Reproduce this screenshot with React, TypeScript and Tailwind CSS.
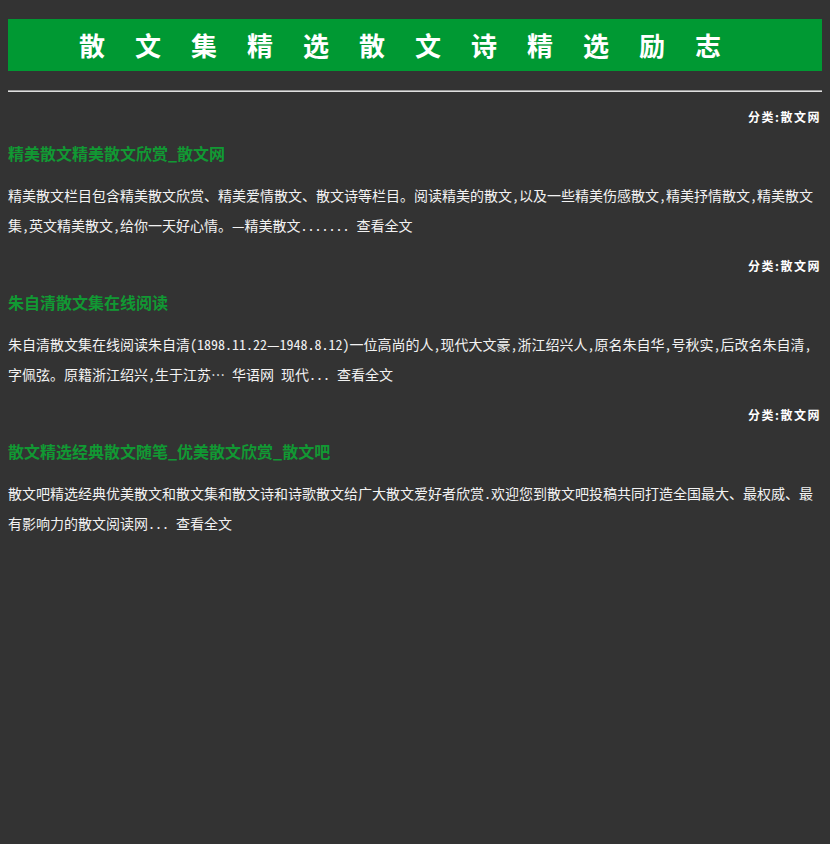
import React from "react";

const items = [
  {
    title: "精美散文精美散文欣赏_散文网",
    l1: "精美散文栏目包含精美散文欣赏、精美爱情散文、散文诗等栏目。阅读精美的散文,以及一些精美伤感散文,精美抒情散文,精美散文",
    l2: "集,英文精美散文,给你一天好心情。—精美散文.......",
  },
  {
    title: "朱自清散文集在线阅读",
    l1: "朱自清散文集在线阅读朱自清(1898.11.22—1948.8.12)一位高尚的人,现代大文豪,浙江绍兴人,原名朱自华,号秋实,后改名朱自清,",
    l2: "字佩弦。原籍浙江绍兴,生于江苏… 华语网 现代...",
  },
  {
    title: "散文精选经典散文随笔_优美散文欣赏_散文吧",
    l1: "散文吧精选经典优美散文和散文集和散文诗和诗歌散文给广大散文爱好者欣赏.欢迎您到散文吧投稿共同打造全国最大、最权威、最",
    l2: "有影响力的散文阅读网...",
  },
];

const font = { fontFamily: '"Noto Sans CJK SC", "Noto Sans", sans-serif' };
const bodyFont = { fontFamily: '"Noto Sans Mono CJK SC", "Noto Sans CJK SC", monospace' };

export default function App() {
  return (
    <div className="min-h-[844px] bg-[#333333] px-2" style={font}>
      <div className="h-[19px]" />
      <div className="flex h-[52px] items-center justify-center bg-[#009933]">
        <h1 className="text-[26px] font-bold leading-none tracking-[30px] text-white">
          散文集精选散文诗精选励志
        </h1>
      </div>
      <div className="h-[19px]" />
      <div className="h-[2px] border-t border-t-[#9a9a9a] bg-[#e0e0e0]" />
      {items.map((it, i) => (
        <div key={i} className={i === 0 ? "pt-[15px]" : "pt-[16px]"}>
          <div className="flex h-[20px] items-center justify-end pr-[1px] text-[12px] font-bold tracking-[1.5px] text-white">
            分类:散文网
          </div>
          <div className="h-[14px]" />
          <div className="flex h-[24px] items-center text-[16px] font-bold text-[#119933]">
            {it.title}
          </div>
          <div className="h-[15px]" />
          <div className="text-[14px] leading-[30px] text-[#f2f2f2]" style={bodyFont}>
            <div className="whitespace-nowrap">{it.l1}</div>
            <div className="flex gap-[7px] whitespace-nowrap">
              <span>{it.l2}</span>
              <span>查看全文</span>
            </div>
          </div>
        </div>
      ))}
    </div>
  );
}
